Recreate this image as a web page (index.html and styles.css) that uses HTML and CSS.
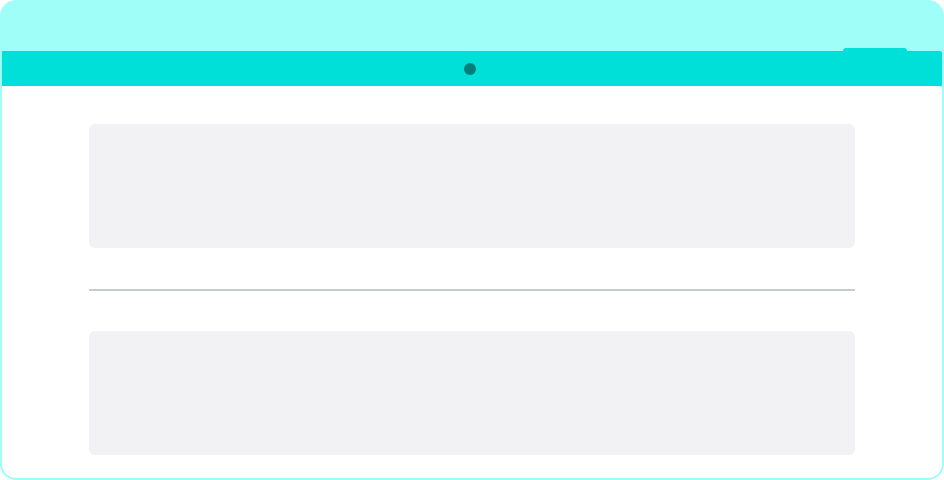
FILE: index.html
```html
<html>
	<head>
		<title></title>
		<link rel="stylesheet" href="styles.css">
	</head>
	<body>
		<div class="frame">
			<div class="frame-top">
				<div class="tab"></div>
			</div>
			<div class="bar">
				<div class="dot"></div>
			</div>
			<div class="content">
				<div class="block"></div>
				<div class="divider"></div>
				<div class="block"></div>
			</div>
		</div>
	</body>
</html>
```
FILE: styles.css
```css
body {
  margin: 0;
  font-family: "Liberation Sans", Arial, sans-serif;
}

/* Outer device frame */
.frame {
  width: 944px;
  height: 480px;
  box-sizing: border-box;
  padding: 0 2px 2px 2px;
  background-color: #9ffff8;
  border-radius: 16px;
  display: flex;
  flex-direction: column;
}

.frame-top {
  height: 51px;
  display: flex;
  justify-content: flex-end;
  align-items: flex-end;
  padding-right: 35px;
}

.tab {
  width: 64px;
  height: 3px;
  background-color: #00dfd8;
  border-radius: 3px 3px 0 0;
}

/* Camera bar */
.bar {
  height: 35px;
  background-color: #00dfd8;
  display: flex;
  justify-content: center;
  align-items: center;
  border-radius: 0 2px 0 0;
}

.dot {
  width: 12px;
  height: 12px;
  border-radius: 50%;
  background-color: #007f7a;
  margin-right: 4px;
}

/* Screen */
.content {
  flex: 1;
  background-color: #fff;
  border-radius: 0 4px 14px 14px;
  padding: 38px 87px 0 87px;
  display: flex;
  flex-direction: column;
}

.block {
  height: 124px;
  background-color: #f2f2f4;
  border-radius: 6px;
}

.divider {
  height: 2px;
  background-color: #c6cad1;
  margin: 41px 0 40px 0;
}
```
